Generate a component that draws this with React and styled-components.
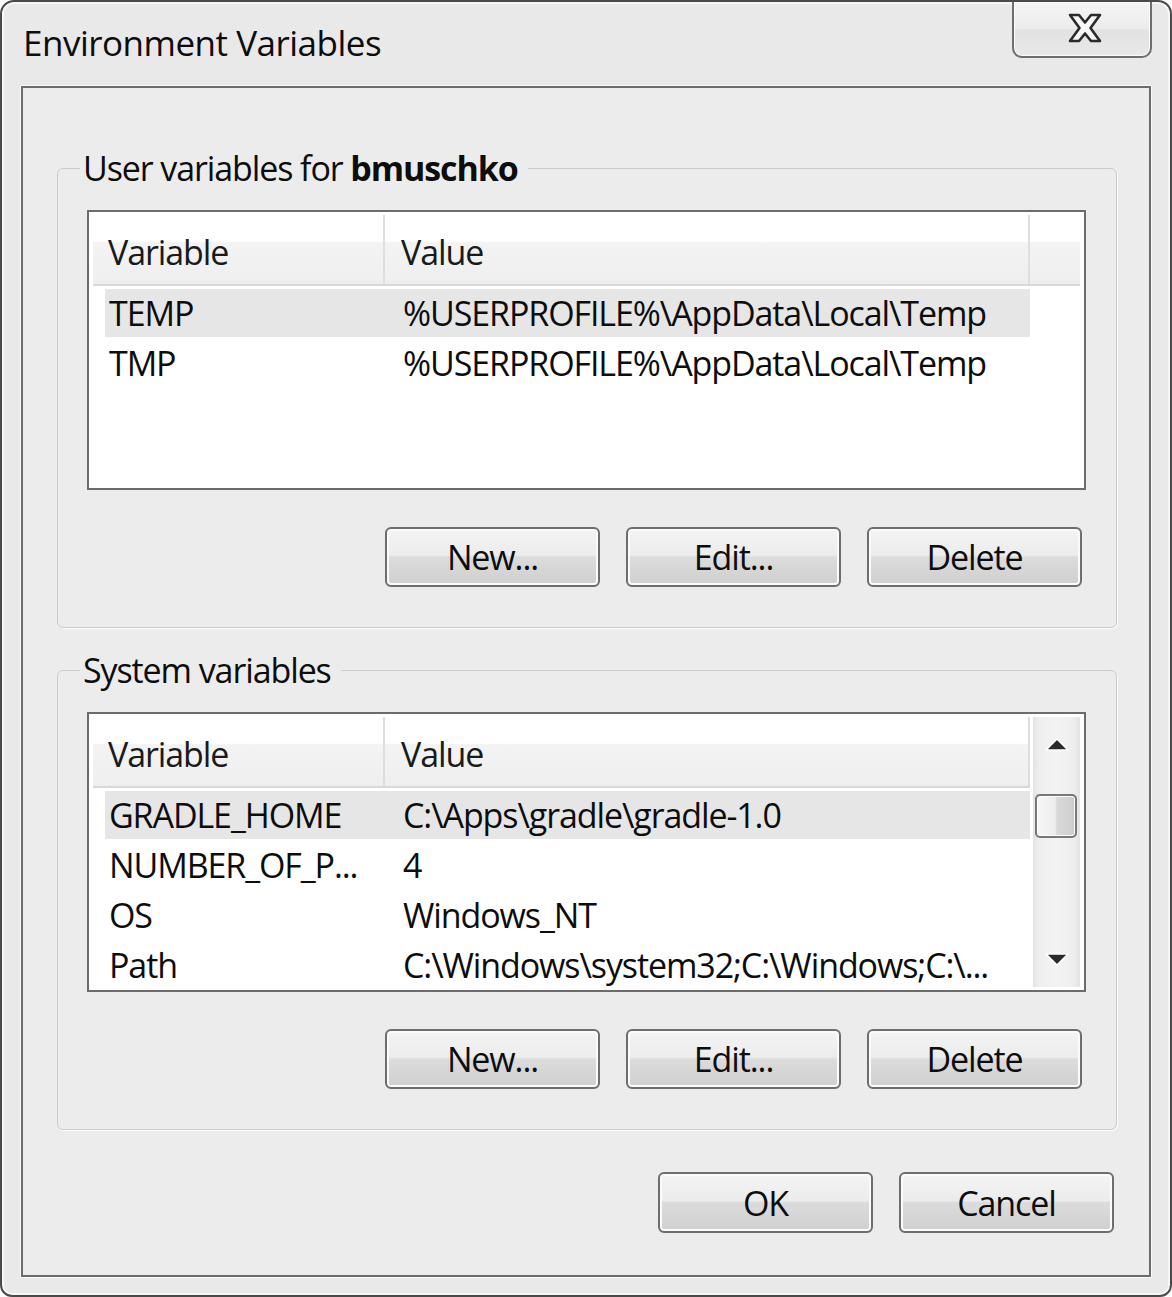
import React from "react";
import styled, { createGlobalStyle } from "styled-components";

const Global = createGlobalStyle`
  html, body { margin: 0; padding: 0; background: #ffffff; }
  body { font-family: "Open Sans", "Noto Sans", sans-serif; }
  * { box-sizing: border-box; }
`;

const Window = styled.div`
  width: 1172px;
  height: 1297px;
  border: 2px solid #4a4a4a;
  border-radius: 14px 14px 12px 12px;
  background: #e9e9e9;
  box-shadow: inset 0 0 0 2px #f6f6f6;
  display: flex;
  flex-direction: column;
  overflow: hidden;
  color: #0d0d0d;
  font-size: 34px;
  letter-spacing: -1.1px;
`;

const TitleBar = styled.div`
  flex: none;
  height: 84px;
  display: flex;
  justify-content: space-between;
  align-items: flex-start;
  padding: 0 18px 0 21px;
`;

const Title = styled.div`
  margin-top: 17px;
  line-height: 48px;
  font-size: 35px;
  letter-spacing: -0.5px;
`;

const CloseButton = styled.button`
  width: 140px;
  height: 56px;
  padding: 0 0 2px 6px;
  border: 2px solid #6e6e6e;
  border-top: none;
  border-radius: 0 0 10px 10px;
  background: linear-gradient(#f5f5f5, #ececec 50%, #e2e2e2 52%, #e8e8e8);
  box-shadow: inset 0 0 0 1px #fbfbfb;
  display: flex;
  align-items: center;
  justify-content: center;
`;

const Client = styled.div`
  flex: 1;
  margin: 0 19px 18px 19px;
  border: 2px solid #6c6c6c;
  box-shadow: 0 0 0 1px #fafafa;
  background: #ececec;
  display: flex;
  flex-direction: column;
`;

const GroupBox = styled.fieldset`
  margin: ${(p) => p.$top}px 32px 0 34px;
  padding: 22px 30px 40px 29px;
  border: 1px solid #cbcbcb;
  border-radius: 6px;
  box-shadow: 1px 1px 0 #fdfdfd;
  min-width: 0;
`;

const Legend = styled.legend`
  padding: 0 10px 0 3px;
  margin-left: -7px;
  line-height: 40px;
`;

const Bold = styled.b`
  font-weight: 700;
`;

const ListView = styled.div`
  height: 280px;
  border: 2px solid #6c6c6c;
  background: #ffffff;
  padding: 3px 4px;
  display: flex;
  gap: 3px;
  overflow: hidden;
`;

const ListMain = styled.div`
  flex: 1;
  min-width: 0;
  display: flex;
  flex-direction: column;
`;

const Header = styled.div`
  flex: none;
  height: 71px;
  display: flex;
  border-bottom: 2px solid #d8d8d8;
  background: linear-gradient(#ffffff 0%, #ffffff 38%, #f3f3f3 40%, #efefef 100%);
`;

const HeaderCell = styled.div`
  flex: ${(p) => (p.$width ? `0 0 ${p.$width}px` : "1")};
  display: flex;
  align-items: center;
  padding-left: ${(p) => p.$pad || 0}px;
  padding-top: 4px;
  border-right: ${(p) => (p.$divider ? "2px solid #dedede" : "none")};
  color: #1a1a1a;
  white-space: nowrap;
`;

const Rows = styled.div`
  display: flex;
  flex-direction: column;
  gap: 2px;
  padding-top: 3px;
`;

const Row = styled.div`
  flex: none;
  width: 925px;
  height: 48px;
  margin-left: 12px;
  display: flex;
  align-items: center;
  background: ${(p) => (p.$selected ? "#e6e6e6" : "transparent")};
  white-space: nowrap;
`;

const NameCell = styled.div`
  flex: 0 0 280px;
  padding-left: 4px;
`;

const ValueCell = styled.div`
  flex: 1;
  padding-left: 18px;
`;

const ScrollBar = styled.div`
  flex: 0 0 47px;
  display: flex;
  flex-direction: column;
  align-items: center;
  background: linear-gradient(to right, #e2e2e2, #eeeeee 12%, #f3f3f3 50%, #eeeeee 88%, #e2e2e2);
`;

const ScrollArrow = styled.div`
  flex: none;
  width: 100%;
  height: 56px;
  display: flex;
  align-items: center;
  justify-content: center;
`;

const Thumb = styled.div`
  flex: none;
  width: 42px;
  height: 44px;
  margin-top: ${(p) => p.$offset}px;
  margin-right: 2px;
  border: 2px solid #787878;
  border-radius: 5px;
  background: linear-gradient(to right, #f7f7f7, #ededed 48%, #d9d9d9 52%, #cdcdcd);
  box-shadow: inset 0 0 0 1px #fcfcfc;
`;

const Spacer = styled.div`
  flex: 1;
`;

const ButtonRow = styled.div`
  display: flex;
  justify-content: flex-end;
  gap: 26px;
  margin: ${(p) => p.$top}px ${(p) => p.$right}px 0 0;
`;

const PushButton = styled.button`
  width: 215px;
  height: ${(p) => p.$height || 60}px;
  padding: 0;
  border: 2px solid #6e6e6e;
  border-radius: 6px;
  background: linear-gradient(#f4f4f4 0%, #ececec 47%, #dcdcdc 50%, #cfcfcf 100%);
  box-shadow: inset 0 0 0 2px #fbfbfb;
  font: inherit;
  letter-spacing: inherit;
  color: #0d0d0d;
  line-height: 1;
`;

const CloseGlyph = () => (
  <svg width="36" height="32" viewBox="0 0 36 32">
    <polygon
      points="3,3 12,3 18,10.5 24,3 33,3 23.5,16 33,29 24,29 18,21.5 12,29 3,29 12.5,16"
      fill="#f6f6f6"
      stroke="#2b2b2b"
      strokeWidth="2.6"
      strokeLinejoin="round"
    />
  </svg>
);

const Arrow = ({ down }) => (
  <svg width="26" height="16" viewBox="0 0 26 16">
    <polygon
      points={down ? "2,3 24,3 13,14" : "2,13 24,13 13,2"}
      fill="#2a2a2a"
      stroke="#ffffff"
      strokeWidth="1.5"
      strokeLinejoin="round"
    />
  </svg>
);

const userVars = [
  { name: "TEMP", value: "%USERPROFILE%\\AppData\\Local\\Temp", selected: true },
  { name: "TMP", value: "%USERPROFILE%\\AppData\\Local\\Temp" },
];

const systemVars = [
  { name: "GRADLE_HOME", value: "C:\\Apps\\gradle\\gradle-1.0", selected: true },
  { name: "NUMBER_OF_P...", value: "4" },
  { name: "OS", value: "Windows_NT" },
  { name: "Path", value: "C:\\Windows\\system32;C:\\Windows;C:\\..." },
];

const VariableList = ({ items, scroll }) => (
  <ListView>
    <ListMain>
      <Header>
        <HeaderCell $width={292} $pad={15} $divider>
          Variable
        </HeaderCell>
        <HeaderCell $width={645} $pad={16} $divider>
          Value
        </HeaderCell>
        {!scroll && <HeaderCell />}
      </Header>
      <Rows>
        {items.map((it) => (
          <Row key={it.name} $selected={it.selected}>
            <NameCell>{it.name}</NameCell>
            <ValueCell>{it.value}</ValueCell>
          </Row>
        ))}
      </Rows>
    </ListMain>
    {scroll && (
      <ScrollBar>
        <ScrollArrow>
          <Arrow />
        </ScrollArrow>
        <Thumb $offset={21} />
        <Spacer />
        <ScrollArrow>
          <Arrow down />
        </ScrollArrow>
      </ScrollBar>
    )}
  </ListView>
);

const ActionButtons = () => (
  <ButtonRow $top={37} $right={4}>
    <PushButton>New...</PushButton>
    <PushButton>Edit...</PushButton>
    <PushButton>Delete</PushButton>
  </ButtonRow>
);

export default function App() {
  return (
    <>
      <Global />
      <Window>
        <TitleBar>
          <Title>Environment Variables</Title>
          <CloseButton aria-label="Close">
            <CloseGlyph />
          </CloseButton>
        </TitleBar>
        <Client>
          <GroupBox $top={60}>
            <Legend>
              User variables for <Bold>bmuschko</Bold>
            </Legend>
            <VariableList items={userVars} />
            <ActionButtons />
          </GroupBox>
          <GroupBox $top={22}>
            <Legend>System variables</Legend>
            <VariableList items={systemVars} scroll />
            <ActionButtons />
          </GroupBox>
          <ButtonRow $top={42} $right={35}>
            <PushButton $height={61}>OK</PushButton>
            <PushButton $height={61}>Cancel</PushButton>
          </ButtonRow>
        </Client>
      </Window>
    </>
  );
}
